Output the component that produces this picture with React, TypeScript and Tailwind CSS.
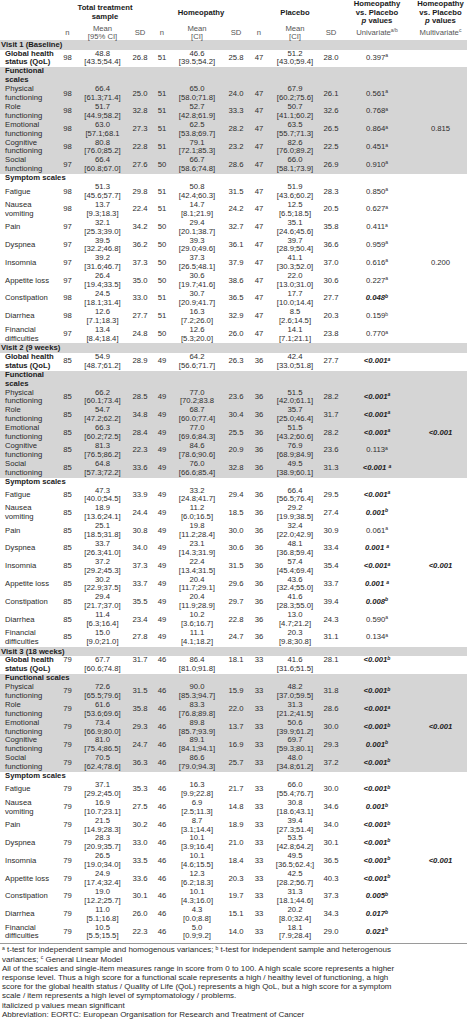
import React from 'react';

// column grid shared by header and body rows
const cols =
  'grid grid-cols-[58px_19px_51px_24px_20px_50px_28px_18px_54px_18px_74px_53px]';

type Row = [string, ...string[]];

function PVal({ s }: { s?: string }) {
  if (!s) return null;
  const sig = s.startsWith('!');
  const [v, sup] = s.replace('!', '').split('^');
  return (
    <span className={sig ? 'font-bold italic text-[#222]' : ''}>
      {v}
      {sup && <sup className="text-[5px]">{sup}</sup>}
    </span>
  );
}

function DataRow({ r, bold, top }: { r: Row; bold?: boolean; top?: boolean }) {
  const [label, n1, m1, c1, s1, n2, m2, c2, s2, n3, m3, c3, s3, p, multi] = r;
  const al = top ? 'self-start' : 'self-center';
  const num = `${al} text-center`;
  const mean = (m: string, c: string) => (
    <div className="text-center">
      {m}
      <br />
      {c}
    </div>
  );
  return (
    <div className={`${cols} leading-[8.9px]`}>
      <div className={`pl-[5px] whitespace-pre-line ${bold ? 'font-bold text-[#1a1a1a]' : 'text-[#2a2a2a]'} ${top ? '' : 'self-center'}`}>
        {label}
      </div>
      <div className={num}>{n1}</div>
      {mean(m1, c1)}
      <div className={num}>{s1}</div>
      <div className={num}>{n2}</div>
      {mean(m2, c2)}
      <div className={num}>{s2}</div>
      <div className={num}>{n3}</div>
      {mean(m3, c3)}
      <div className={num}>{s3}</div>
      <div className={num}>
        <PVal s={p} />
      </div>
      <div className={num}>
        <PVal s={multi} />
      </div>
    </div>
  );
}

type Visit = {
  title: string;
  global: Row;
  globalTop?: boolean;
  funcTitle: string;
  functional: Row[];
  symptoms: Row[];
};

const visits: Visit[] = [
  {
    title: 'Visit 1 (Baseline)',
    global: ['Global health\nstatus (QoL)', '98', '48.8', '[43.5;54.4]', '26.8', '51', '46.6', '[39.5;54.2]', '25.8', '47', '51.2', '[43.0;59.4]', '28.0', '0.397^a'],
    funcTitle: 'Functional\nscales',
    functional: [
      ['Physical\nfunctioning', '98', '66.4', '[61.3;71.4]', '25.0', '51', '65.0', '[58.0;71.8]', '24.0', '47', '67.9', '[60.2;75.6]', '26.1', '0.561^a'],
      ['Role\nfunctioning', '98', '51.7', '[44.9;58.2]', '32.8', '51', '52.7', '[42.8;61.9]', '33.3', '47', '50.7', '[41.1;60.2]', '32.6', '0.768^a'],
      ['Emotional\nfunctioning', '98', '63.0', '[57.1;68.1', '27.3', '51', '62.5', '[53.8;69.7]', '28.2', '47', '63.5', '[55.7;71.3]', '26.5', '0.864^a', '0.815'],
      ['Cognitive\nfunctioning', '98', '80.8', '[76.0;85.2]', '22.8', '51', '79.1', '[72.1;85.3]', '23.2', '47', '82.6', '[76.0;89.2]', '22.5', '0.451^a'],
      ['Social\nfunctioning', '97', '66.4', '[60.8;67.0]', '27.6', '50', '66.7', '[58.6;74.8]', '28.6', '47', '66.0', '[58.1;73.9]', '26.9', '0.910^a'],
    ],
    symptoms: [
      ['Fatigue', '98', '51.3', '[45.6;57.7]', '29.8', '51', '50.8', '[42.4;60.3]', '31.5', '47', '51.9', '[43.6;60.2]', '28.3', '0.850^a'],
      ['Nausea\nvomiting', '98', '13.7', '[9.3;18.3]', '22.4', '51', '14.7', '[8.1;21.9]', '24.2', '47', '12.5', '[6.5;18.5]', '20.5', '0.627^a'],
      ['Pain', '97', '32.1', '[25.3;39.0]', '34.2', '50', '29.4', '[20.1;38.7]', '32.7', '47', '35.1', '[24.6;45.6]', '35.8', '0.411^a'],
      ['Dyspnea', '97', '39.5', '[32.2;46.8]', '36.2', '50', '39.3', '[29.0;49.6]', '36.1', '47', '39.7', '[28.9;50.4]', '36.6', '0.959^a'],
      ['Insomnia', '97', '39.2', '[31.6;46.7]', '37.3', '50', '37.3', '[26.5;48.1]', '37.9', '47', '41.1', '[30.3;52.0]', '37.0', '0.616^a', '0.200'],
      ['Appetite loss', '97', '26.4', '[19.4;33.5]', '35.0', '50', '30.6', '[19.7;41.6]', '38.6', '47', '22.0', '[13.0;31.0]', '30.6', '0.227^a'],
      ['Constipation', '98', '24.5', '[18.1;31.4]', '33.0', '51', '30.7', '[20.9;41.7]', '36.5', '47', '17.7', '[10.0;14.4]', '27.7', '!0.048^b'],
      ['Diarrhea', '98', '12.6', '[7.1;18.3]', '27.7', '51', '16.3', '[7.2;26.0]', '32.9', '47', '8.5', '[2.6;14.5]', '20.3', '0.159^b'],
      ['Financial\ndifficulties', '97', '13.4', '[8.4;18.4]', '24.8', '50', '12.6', '[5.3;20.0]', '26.0', '47', '14.1', '[7.1;21.1]', '23.8', '0.770^a'],
    ],
  },
  {
    title: 'Visit 2 (9 weeks)',
    global: ['Global health\nstatus (QoL)', '85', '54.9', '[48.7;61.2]', '28.9', '49', '64.2', '[56.6;71.7]', '26.3', '36', '42.4', '[33.0;51.8]', '27.7', '!<0.001^a'],
    funcTitle: 'Functional\nscales',
    functional: [
      ['Physical\nfunctioning', '85', '66.2', '[60.1;73.4]', '28.5', '49', '77.0', '[70.2;83.8', '23.6', '36', '51.5', '[42.0;61.1]', '28.2', '!<0.001^a'],
      ['Role\nfunctioning', '85', '54.7', '[47.2;62.2]', '34.8', '49', '68.7', '[60.0;77.4]', '30.4', '36', '35.7', '[25.0;46.4]', '31.7', '!<0.001^a'],
      ['Emotional\nfunctioning', '85', '66.3', '[60.2;72.5]', '28.4', '49', '77.0', '[69.6;84.3]', '25.5', '36', '51.5', '[43.2;60.6]', '28.2', '!<0.001^a', '!<0.001'],
      ['Cognitive\nfunctioning', '85', '81.3', '[76.5;86.2]', '22.3', '49', '84.6', '[78.6;90.6]', '20.9', '36', '76.9', '[68.9;84.9]', '23.6', '0.113^a'],
      ['Social\nfunctioning', '85', '64.8', '[57.3;72.2]', '33.6', '49', '76.0', '[66.6;85.4]', '32.8', '36', '49.5', '[38.9;60.1]', '31.3', '!<0.001 ^a'],
    ],
    symptoms: [
      ['Fatigue', '85', '47.3', '[40.0;54.5]', '33.9', '49', '33.2', '[24.8;41.7]', '29.4', '36', '66.4', '[56.5;76.4]', '29.5', '!<0.001^a'],
      ['Nausea\nvomiting', '85', '18.9', '[13.6;24.1]', '24.4', '49', '11.2', '[6.0;16.5]', '18.5', '36', '29.2', '[19.9;38.5]', '27.4', '!0.001^b'],
      ['Pain', '85', '25.1', '[18.5;31.8]', '30.8', '49', '19.8', '[11.2;28.4]', '30.0', '36', '32.4', '[22.0;42.9]', '30.9', '0.061^a'],
      ['Dyspnea', '85', '33.7', '[26.3;41.0]', '34.0', '49', '23.1', '[14.3;31.9]', '30.6', '36', '48.1', '[36.8;59.4]', '33.4', '!0.001 ^a'],
      ['Insomnia', '85', '37.2', '[29.2;45.3]', '37.3', '49', '22.4', '[13.4;31.5]', '31.5', '36', '57.4', '[45.4;69.4]', '35.4', '!<0.001^a', '!<0.001'],
      ['Appetite loss', '85', '30.2', '[22.9;37.5]', '33.7', '49', '20.4', '[11.7;29.1]', '29.6', '36', '43.6', '[32.4;55.0]', '33.7', '!0.001 ^a'],
      ['Constipation', '85', '29.4', '[21.7;37.0]', '35.5', '49', '20.4', '[11.9;28.9]', '29.7', '36', '41.6', '[28.3;55.0]', '39.4', '!0.008^b'],
      ['Diarrhea', '85', '11.4', '[6.3;16.4]', '23.4', '49', '10.2', '[3.6;16.7]', '22.8', '36', '13.0', '[4.7;21.2]', '24.3', '0.590^a'],
      ['Financial\ndifficulties', '85', '15.0', '[9.0;21.0]', '27.8', '49', '11.1', '[4.1;18.2]', '24.7', '36', '20.3', '[9.8;30.8]', '31.1', '0.134^a'],
    ],
  },
  {
    title: 'Visit 3 (18 weeks)',
    global: ['Global health\nstatus (QoL)', '79', '67.7', '[60.6;74.8]', '31.7', '46', '86.4', '[81.0;91.8]', '18.1', '33', '41.6', '[31.6;51.5]', '28.1', '!<0.001^b'],
    globalTop: true,
    funcTitle: 'Functional scales',
    functional: [
      ['Physical\nfunctioning', '79', '72.6', '[65.5;79.6]', '31.5', '46', '90.0', '[85.3;94.7]', '15.9', '33', '48.2', '[37.0;59.5]', '31.8', '!<0.001^b'],
      ['Role\nfunctioning', '79', '61.6', '[53.6;69.6]', '35.8', '46', '83.3', '[76.8;89.8]', '22.0', '33', '31.3', '[21.2;41.5]', '28.6', '!<0.001^a'],
      ['Emotional\nfunctioning', '79', '73.4', '[66.9;80.0]', '29.3', '46', '89.8', '[85.7;93.9]', '13.7', '33', '50.6', '[39.9;61.2]', '30.0', '!<0.001^b', '!<0.001'],
      ['Cognitive\nfunctioning', '79', '81.0', '[75.4;86.5]', '24.7', '46', '89.1', '[84.1;94.1]', '16.9', '33', '69.7', '[59.3;80.1]', '29.3', '!0.001^b'],
      ['Social\nfunctioning', '79', '70.5', '[62.4;78.6]', '36.3', '46', '86.6', '[79.0;94.3]', '25.7', '33', '48.0', '[34.8;61.2]', '37.2', '!<0.001^b'],
    ],
    symptoms: [
      ['Fatigue', '79', '37.1', '[29.2;45.0]', '35.3', '46', '16.3', '[9.9;22.8]', '21.7', '33', '66.0', '[55.4;76.7]', '30.0', '!<0.001^b'],
      ['Nausea\nvomiting', '79', '16.9', '[10.7;23.1]', '27.5', '46', '6.9', '[2.5;11.3]', '14.8', '33', '30.8', '[18.6;43.1]', '34.6', '!0.001^b'],
      ['Pain', '79', '21.5', '[14.9;28.3]', '30.2', '46', '8.7', '[3.1;14.4]', '18.9', '33', '39.4', '[27.3;51.4]', '34.0', '!<0.001^b'],
      ['Dyspnea', '79', '28.3', '[20.9;35.7]', '33.0', '46', '10.1', '[3.9;16.4]', '21.0', '33', '53.5', '[42.8;64.2]', '30.1', '!<0.001^b'],
      ['Insomnia', '79', '26.5', '[19.0;34.0]', '33.5', '46', '10.1', '[4.6;15.5]', '18.4', '33', '49.5', '[36.5;62.4;]', '36.5', '!<0.001^b', '!<0.001'],
      ['Appetite loss', '79', '24.9', '[17.4;32.4]', '33.6', '46', '12.3', '[6.2;18.3]', '20.3', '33', '42.5', '[28.2;56.7]', '40.3', '!<0.001^b'],
      ['Constipation', '79', '19.0', '[12.2;25.7]', '30.1', '46', '10.1', '[4.3;16.0]', '19.7', '33', '31.3', '[18.1;44.6]', '37.3', '!0.005^b'],
      ['Diarrhea', '79', '11.0', '[5.1;16.8]', '26.0', '46', '4.3', '[0.0;8.8]', '15.1', '33', '20.2', '[8.0;32.4]', '34.3', '!0.017^b'],
      ['Financial\ndifficulties', '79', '10.5', '[5.5;15.5]', '22.3', '46', '5.0', '[0.9;9.2]', '14.0', '33', '18.1', '[7.9;28.4]', '29.0', '!0.021^b'],
    ],
  },
];

function PHead() {
  return (
    <div className="text-center">
      Homeopathy
      <br />
      vs. Placebo
      <br />
      <i>p</i> values
    </div>
  );
}

export default function App() {
  return (
    <div className="w-[467px] overflow-hidden bg-white font-['Liberation_Sans',Arial,sans-serif] text-[7.7px] text-[#2e2e2e]">
      {/* Header */}
      <div className={`${cols} h-[25px] items-center font-bold leading-[8.5px] text-[#1a1a1a]`}>
        <div />
        <div className="col-span-3 text-center">
          Total treatment
          <br />
          sample
        </div>
        <div className="col-span-3 text-center">Homeopathy</div>
        <div className="col-span-3 text-center">Placebo</div>
        <PHead />
        <PHead />
      </div>
      <div className={`${cols} h-[15px] items-center text-center leading-[7.5px] text-[#555]`}>
        <div />
        <div>n</div>
        <div>
          Mean
          <br />
          [95% CI]
        </div>
        <div>SD</div>
        <div>n</div>
        <div>
          Mean
          <br />
          [CI]
        </div>
        <div>SD</div>
        <div>n</div>
        <div>
          Mean
          <br />
          [CI]
        </div>
        <div>SD</div>
        <div>
          Univariate<sup className="text-[5px]">a/b</sup>
        </div>
        <div>
          Multivariate<sup className="text-[5px]">c</sup>
        </div>
      </div>

      {visits.map((v) => (
        <div key={v.title}>
          <div className="bg-[#d5d5d5] pl-[1px] font-bold leading-[9.5px] text-[#1a1a1a]">{v.title}</div>
          <DataRow r={v.global} bold top={v.globalTop} />
          <div className="bg-[#d5d5d5]">
            <div className="whitespace-pre-line pl-[5px] font-bold leading-[8.9px] text-[#1a1a1a]">{v.funcTitle}</div>
            {v.functional.map((r) => (
              <DataRow key={r[0]} r={r} />
            ))}
          </div>
          <div className="pl-[5px] font-bold leading-[8.9px] text-[#1a1a1a]">Symptom scales</div>
          {v.symptoms.map((r) => (
            <DataRow key={r[0]} r={r} />
          ))}
        </div>
      ))}

      {/* Footnotes */}
      <div className="mt-[2px] whitespace-nowrap border-t border-[#9a9a9a] pl-[2px] pt-[1px] text-[8px] leading-[9.2px] text-[#2a2a2a]">
        <sup className="text-[5px]">a</sup> t-test for independent sample and homogenous variances;{' '}
        <sup className="text-[5px]">b</sup> t-test for independent sample and heterogenous
        <br />
        variances; <sup className="text-[5px]">c</sup> General Linear Model
        <br />
        All of the scales and single-item measures range in score from 0 to 100. A high scale score represents a higher
        <br />
        response level. Thus a high score for a functional scale represents a high / healthy level of functioning, a high
        <br />
        score for the global health status / Quality of Life (QoL) represents a high QoL, but a high score for a symptom
        <br />
        scale / item represents a high level of symptomatology / problems.
        <br />
        italicized p values mean significant
        <br />
        Abbreviation: EORTC: European Organisation for Research and Treatment of Cancer
      </div>
    </div>
  );
}
